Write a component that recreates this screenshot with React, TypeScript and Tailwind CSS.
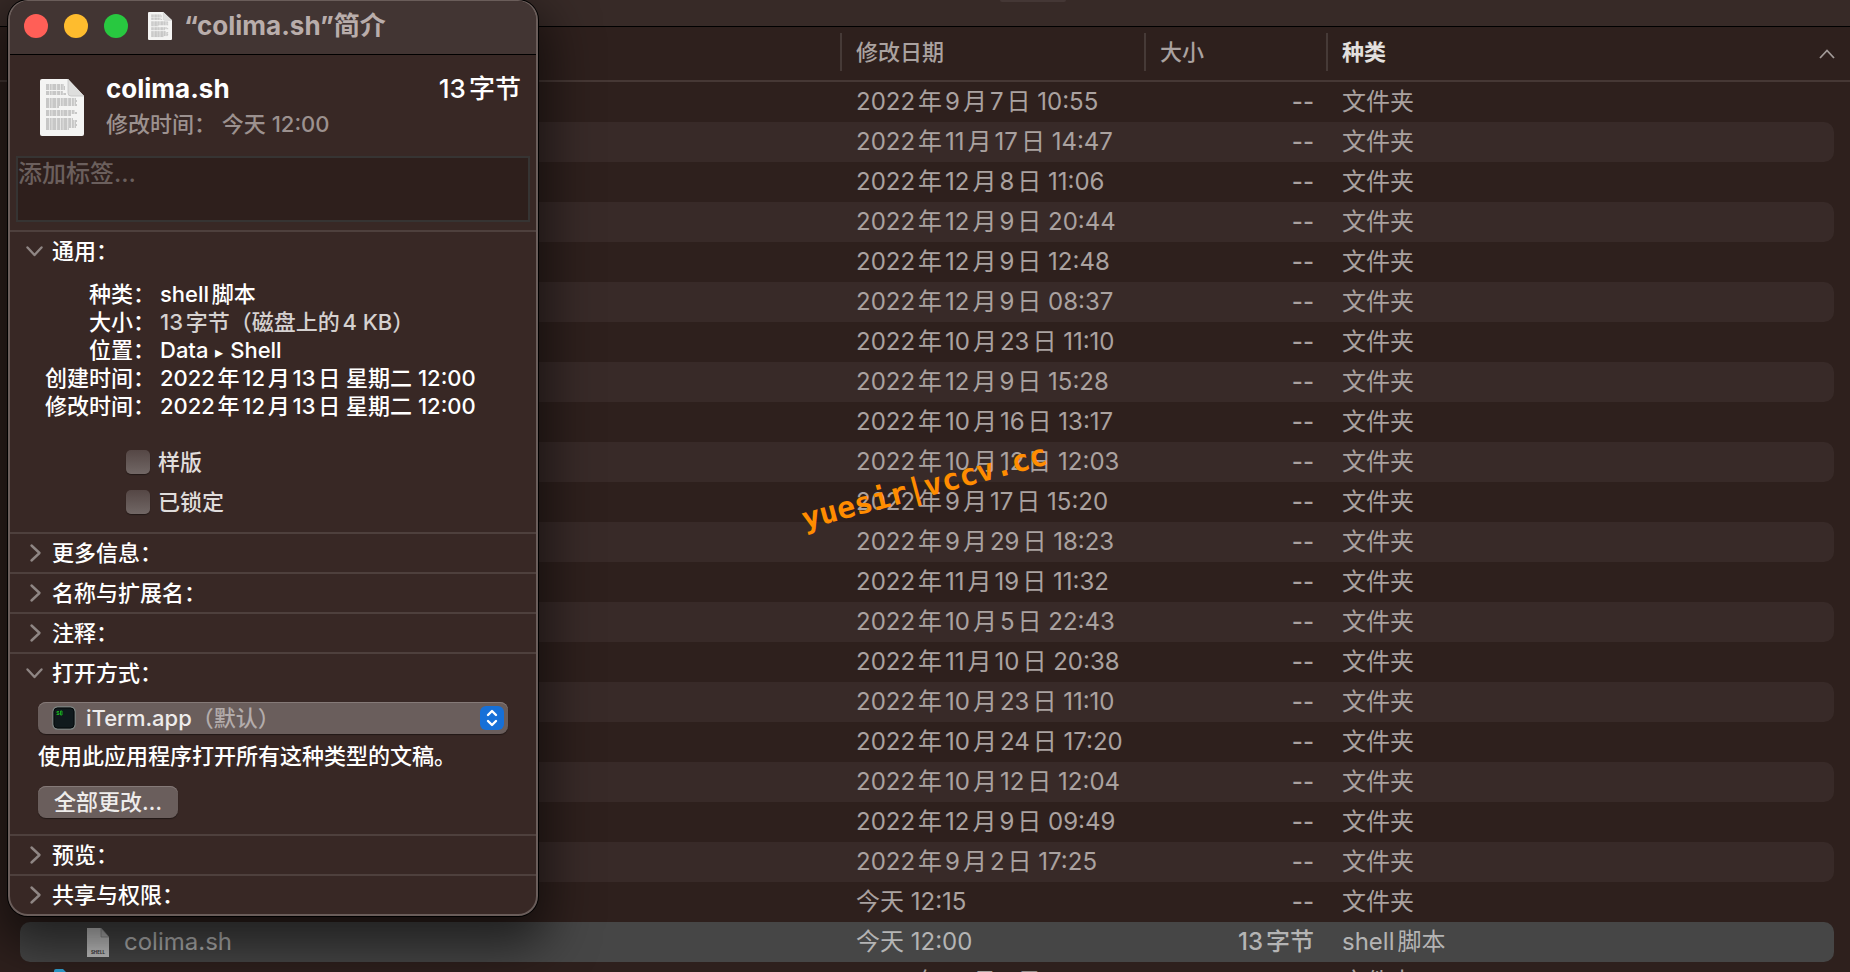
const dates: string[] = [
  "2022年9月7日 10:55", "2022年11月17日 14:47", "2022年12月8日 11:06", "2022年12月9日 20:44",
  "2022年12月9日 12:48", "2022年12月9日 08:37", "2022年10月23日 11:10", "2022年12月9日 15:28",
  "2022年10月16日 13:17", "2022年10月12日 12:03", "2022年9月17日 15:20", "2022年9月29日 18:23",
  "2022年11月19日 11:32", "2022年10月5日 22:43", "2022年11月10日 20:38", "2022年10月23日 11:10",
  "2022年10月24日 17:20", "2022年10月12日 12:04", "2022年12月9日 09:49", "2022年9月2日 17:25",
  "今天 12:15",
];

type Row = { name?: string; date: string; size: string; kind: string; selected?: boolean; folder?: boolean };

const rows: Row[] = [
  ...dates.map((date) => ({ date, size: "--", kind: "文件夹" })),
  { name: "colima.sh", date: "今天 12:00", size: "13字节", kind: "shell脚本", selected: true },
  { date: "2022年12月8日 11:06", size: "--", kind: "文件夹", folder: true },
];

function DocIcon({ className }: { className: string }) {
  const lines = [
    [7, 18], [9, 19], [11, 19], [14, 17], [16, 20], [21, 30], [23, 31], [25, 30], [27, 31],
    [29, 13], [33, 29], [35, 31], [37, 25], [41, 27], [43, 31], [45, 30], [47, 31], [49, 30], [51, 23],
  ];
  return (
    <svg viewBox="0 0 44 57" className={className} preserveAspectRatio="none" aria-hidden="true">
      <path d="M2 0H28L44 17V55a2 2 0 0 1-2 2H2a2 2 0 0 1-2-2V2a2 2 0 0 1 2-2z" fill="#f4f4f3" />
      {lines.map(([y, w]) => (
        <path key={y} d={`M6 ${y - 1}h${w}`} stroke="#9a9a9a" strokeWidth="1" strokeDasharray="3 .7 2 .6 4 .8" />
      ))}
      <path d="M28 0V14a3 3 0 0 0 3 3H44z" fill="#dededd" />
      <path d="M28 0V14a3 3 0 0 0 3 3H44" fill="none" stroke="#c4c4c4" strokeWidth=".8" />
    </svg>
  );
}

function Chevron({ open }: { open?: boolean }) {
  return (
    <svg viewBox="0 0 20 20" className="size-5 shrink-0" fill="none" stroke="#8f8684" strokeWidth="2.4" strokeLinecap="round" strokeLinejoin="round" aria-hidden="true">
      <path d={open ? "M2.500 6.500l7 7.500 7-7.500" : "M6.500 2.500l8 7.500-8 7.500"} />
    </svg>
  );
}

function Section({ title, open, children }: { title: string; open?: boolean; children?: React.ReactNode }) {
  return (
    <section className="border-t-2 border-[#4e403d]">
      <h2>
        <button className="flex h-[38px] w-full items-center gap-[7px] pl-[15px] text-left text-[22px] font-medium text-white" aria-expanded={!!open}>
          <Chevron open={open} />
          {title}
        </button>
      </h2>
      {children}
    </section>
  );
}

function Check({ label }: { label: string }) {
  return (
    <label className="flex h-10 items-center gap-2 text-[22px] text-[#e0dddc]">
      <input type="checkbox" className="size-6 appearance-none rounded-[5px] bg-linear-to-b from-[#554745] to-[#716765] shadow-[0_1px_1px_#0006]" />
      {label}
    </label>
  );
}

function InfoRow({ label, dim, children }: { label: string; dim?: boolean; children: React.ReactNode }) {
  return (
    <>
      <dt className="text-right text-white">{label}：</dt>
      <dd className={dim ? "text-[#d5d1d0]" : "text-white"}>{children}</dd>
    </>
  );
}

function InfoWindow() {
  return (
    <aside className="absolute top-0 left-2 w-[530px] overflow-hidden rounded-[20px] border-2 border-t border-[#6a5d5a] bg-[#382825] font-medium shadow-[0_0_0_1px_#000,0_20px_50px_10px_rgba(0,0,0,0.55)]">
      <header className="flex h-[54px] items-center border-b border-black bg-[#423533] pl-[14px] pb-1">
        <div className="flex gap-4">
          <button aria-label="关闭" className="size-6 rounded-full bg-[#ff5f57]" />
          <button aria-label="最小化" className="size-6 rounded-full bg-[#febc2e]" />
          <button aria-label="缩放" className="size-6 rounded-full bg-[#28c840]" />
        </div>
        <DocIcon className="ml-5 h-7 w-6" />
        <h1 className="ml-3 text-[26px] leading-8 font-bold text-[#b9adab]">“colima.sh”简介</h1>
      </header>
      <div className="flex h-[101px] items-start pt-4 pr-[15px] pl-[30px]">
        <DocIcon className="mt-2 h-[57px] w-11" />
        <div className="ml-[22px] flex-1">
          <div className="flex justify-between text-[26px] leading-9 text-white">
            <span className="font-bold">colima.sh</span>
            <span>13字节</span>
          </div>
          <p className="text-[22px] leading-[34px] text-[#9c918f]">修改时间： 今天 12:00</p>
        </div>
      </div>
      <div className="px-[6px] pb-2">
        <textarea aria-label="标签" placeholder="添加标签…" className="block h-[66px] w-full resize-none border-2 border-[#363433] bg-[#2e1f1c] text-2xl leading-8 placeholder:text-[#6b5f5d]" />
      </div>
      <Section title="通用：" open>
        <dl className="grid grid-cols-[145px_1fr] gap-x-[5px] pt-[10px] text-[22px] leading-7">
          <InfoRow label="种类">shell脚本</InfoRow>
          <InfoRow label="大小" dim>13字节（磁盘上的4 KB）</InfoRow>
          <InfoRow label="位置">Data <span className="mx-px text-base">▸</span> Shell</InfoRow>
          <InfoRow label="创建时间">2022年12月13日 星期二 12:00</InfoRow>
          <InfoRow label="修改时间">2022年12月13日 星期二 12:00</InfoRow>
        </dl>
        <div className="flex flex-col items-start pt-[22px] pb-[10px] pl-[116px]">
          <Check label="样版" />
          <Check label="已锁定" />
        </div>
      </Section>
      <Section title="更多信息：" />
      <Section title="名称与扩展名：" />
      <Section title="注释：" />
      <Section title="打开方式：" open>
        <div className="flex h-[142px] flex-col items-start pt-[10px] pr-[28px] pl-7">
          <div className="grid w-full items-center rounded-lg bg-[#6a5e5c] shadow-[0_1px_1px_#0006,inset_0_1px_0_#857a78]">
            <select aria-label="打开方式" className="col-start-1 row-start-1 h-8 w-full appearance-none opacity-0">
              <option>iTerm.app（默认）</option>
            </select>
            <div className="pointer-events-none col-start-1 row-start-1 flex h-8 items-center pr-1 pl-[14px] text-[22px]">
              <svg viewBox="0 0 24 24" className="size-6" aria-hidden="true">
                <rect x="1" y="1" width="22" height="22" rx="4.500" fill="#101a1d" stroke="#7d8583" strokeWidth="1.400" />
                <rect x="2" y="2" width="20" height="20" rx="3.500" fill="none" stroke="#05090a" strokeWidth="1" />
                <path d="M7 5.500H5v1.500h2V8.500H4.500M8.500 5h1.500v4H8.500z" fill="none" stroke="#17a81f" strokeWidth="1" />
              </svg>
              <span className="ml-[10px] text-[#eeeceb]">iTerm.app</span>
              <span className="text-[#b3acab]">（默认）</span>
              <span className="ml-auto flex size-6 items-center justify-center rounded-md bg-[#1670d8]">
                <svg viewBox="0 0 24 24" className="size-6" fill="none" stroke="#fff" strokeWidth="2.400" strokeLinecap="round" strokeLinejoin="round" aria-hidden="true">
                  <path d="M8 9l4-4 4 4M8 15l4 4 4-4" />
                </svg>
              </span>
            </div>
          </div>
          <p className="mt-[6px] text-[22px] leading-8 text-white">使用此应用程序打开所有这种类型的文稿。</p>
          <button className="mt-[14px] h-8 rounded-lg bg-[#6a5e5c] px-4 text-[22px] leading-8 text-[#eeeceb] shadow-[0_1px_1px_#0006,inset_0_1px_0_#857a78]">全部更改…</button>
        </div>
      </Section>
      <Section title="预览：" />
      <Section title="共享与权限：" />
    </aside>
  );
}

function FileTable() {
  return (
    <table className="w-full table-fixed border-collapse text-left text-2xl text-[#aaa2a0]">
      <colgroup>
        <col className="w-[840px]" />
        <col className="w-[304px]" />
        <col className="w-[182px]" />
        <col />
      </colgroup>
      <thead className="text-[22px]">
        <tr className="h-[54px] border-b-2 border-[#463835]">
          <th aria-label="名称" className="p-0" />
          <th className="p-0 font-medium"><div className="mb-1 h-[38px] border-l-2 border-[#463a37] pl-[14px] leading-[38px]">修改日期</div></th>
          <th className="p-0 font-medium"><div className="mb-1 h-[38px] border-l-2 border-[#463a37] pl-[14px] leading-[38px]">大小</div></th>
          <th className="p-0 font-bold text-[#e3e0df]">
            <div className="mb-1 flex h-[38px] items-center justify-between border-l-2 border-[#463a37] pr-[15px] pl-[14px] leading-[38px]">
              种类
              <svg viewBox="0 0 16 10" className="mt-1 h-[10px] w-4" fill="none" stroke="#a29a98" strokeWidth="1.800" aria-hidden="true">
                <path d="M1 9l7-7.500L15 9" />
              </svg>
            </div>
          </th>
        </tr>
      </thead>
      <tbody>
        {rows.map((row, i) => {
          const bg = row.selected ? "bg-[#464646] text-[#b4b4b4]" : i % 2 ? "bg-[#382a28]" : "";
          return (
            <tr key={i}>
              <td className="p-0 pl-5">
                <div className={`flex h-10 items-center rounded-l-[10px] ${bg}`}>
                  {row.selected && (
                    <svg viewBox="0 0 22 29" className="ml-[67px] h-[29px] w-[22px]" aria-hidden="true">
                      <path d="M0 0h14l8 9v20H0z" fill="#c4c4c4" />
                      <path d="M14 0v9h8z" fill="#b2b2b2" stroke="#777" strokeWidth=".6" />
                      <text x="11" y="26" textAnchor="middle" fontSize="4.500" fontWeight="700" fill="#333" fontFamily="Inter, sans-serif">SHELL</text>
                    </svg>
                  )}
                  {row.folder && (
                    <svg viewBox="0 0 32 26" className="ml-8 h-[26px] w-8" aria-hidden="true">
                      <path d="M2 2a2 2 0 0 1 2-2h7l3 3h16a2 2 0 0 1 2 2v19a2 2 0 0 1-2 2H4a2 2 0 0 1-2-2z" fill="#2f9fd0" />
                    </svg>
                  )}
                  {row.name && <span className="ml-[15px]">{row.name}</span>}
                </div>
              </td>
              <td className="p-0"><div className={`h-10 pl-4 leading-10 whitespace-nowrap ${bg}`}>{row.date}</div></td>
              <td className="p-0"><div className={`h-10 pr-3 text-right leading-10 font-medium ${bg}`}>{row.size}</div></td>
              <td className="p-0 pr-4"><div className={`h-10 rounded-r-[10px] pl-4 leading-10 ${bg}`}>{row.kind}</div></td>
            </tr>
          );
        })}
      </tbody>
    </table>
  );
}

export default function App() {
  return (
    <main className="relative h-screen overflow-hidden bg-[#2e201d] font-[Inter,'Noto_Sans_CJK_SC',sans-serif] [text-autospace:normal]">
      <div className="flex h-[27px] items-start border-b border-black bg-[#372a27] pl-[1000px]">
        <div className="h-[2px] w-[66px] rounded-b-md bg-[#443735]" />
      </div>
      <FileTable />
      <InfoWindow />
      <div className="pointer-events-none absolute top-[469px] left-[798px] -rotate-[15deg] font-['DejaVu_Sans_Mono',monospace] text-[30px] leading-9 font-bold text-[#ff8c00]">yuesir|vccv.cc</div>
    </main>
  );
}
